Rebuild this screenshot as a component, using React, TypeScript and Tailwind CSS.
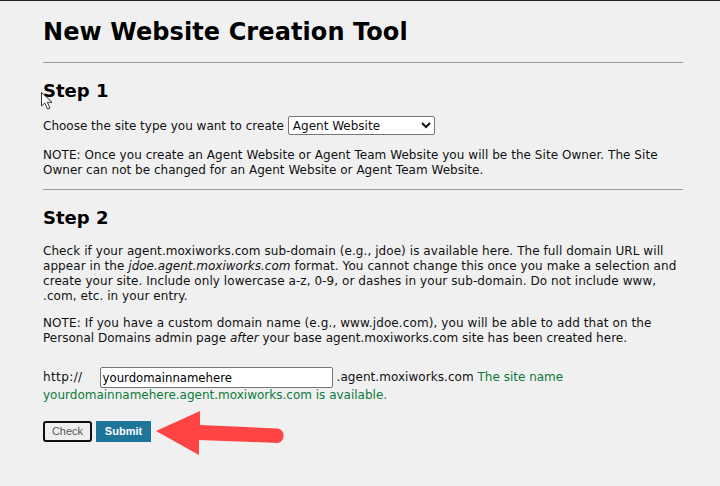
export default function App() {
  return (
    <div className="relative h-[486px] w-[720px] overflow-hidden border-t border-[#1f2328] bg-[#f0f0f0] font-['DejaVu_Sans',sans-serif] text-[12px] leading-[15px] text-[#111]">
      <div className="ml-[43px] w-[640px]">
        <h1 className="mt-[17px] text-[24px] leading-[29px] font-bold tracking-[0.09px] text-black">New Website Creation Tool</h1>
        <hr className="mt-[15px] border-t border-[#999]" />

        <h2 className="mt-[17px] text-[18px] leading-[21px] font-bold text-black">Step 1</h2>
        <div className="mt-[15px] flex h-[19px] items-center">
          <span className="pt-[1px]">Choose the site type you want to create</span>
          <select className="ml-[4px] h-[19px] w-[147px] rounded-[2px] border border-[#767676] bg-white text-[12px]" defaultValue="Agent Website">
            <option>Agent Website</option>
          </select>
        </div>
        <p className="mt-[13px]">
          <span className="tracking-[0.05px]">NOTE: Once you create an Agent Website or Agent Team Website you will be the Site Owner. The Site</span>{" "}
          <span className="tracking-[0.02px]">Owner can not be changed for an Agent Website or Agent Team Website.</span>
        </p>
        <hr className="mt-[11px] border-t border-[#999]" />

        <h2 className="mt-[17px] text-[18px] leading-[21px] font-bold text-black">Step 2</h2>
        <p className="mt-[16px] tracking-[0.07px]">
          Check if your agent.moxiworks.com sub-domain (e.g., jdoe) is available here. The full domain URL will appear in the <em className="tracking-normal">jdoe.agent.moxiworks.com</em> format. You cannot change this once you make a selection and create your site. Include only lowercase a-z, 0-9, or dashes in your sub-domain. Do not include www, .com, etc. in your entry.
        </p>
        <p className="mt-[12px]">
          <span className="tracking-[0.1px]">NOTE: If you have a custom domain name (e.g., www.jdoe.com), you will be able to add that on the</span>{" "}
          <span className="tracking-[0.01px]">Personal Domains admin page <em>after</em> your base agent.moxiworks.com site has been created here.</span>
        </p>

        <div className="mt-[21px]">
          <span className="mr-[17px] tracking-[0.4px]">http://</span>
          <input
            className="h-[21px] w-[233px] rounded-[2px] border border-[#767676] bg-white px-[2px] align-middle text-[11.7px] text-black"
            defaultValue="yourdomainnamehere"
          />
          <span className="ml-[4px] tracking-[0.05px]">.agent.moxiworks.com</span>{" "}
          <span className="text-[#0b7a3a]">The site name yourdomainnamehere.agent.moxiworks.com is available.</span>
        </div>

        <div className="mt-[18px] flex gap-[4px]">
          <button className="h-[21px] w-[49px] rounded-[3px] border-2 border-[#101010] bg-[#efefef] font-['Liberation_Sans',sans-serif] text-[11px] text-[#555]">
            Check
          </button>
          <button className="h-[21px] w-[55px] bg-[#1f7499] font-['Liberation_Sans',sans-serif] text-[11px] font-bold text-white">
            Submit
          </button>
        </div>
      </div>

      {/* annotation arrow */}
      <svg className="absolute left-[155px] top-[409px]" width="132" height="48" viewBox="0 0 132 48">
        <path d="M1 21 L45 1 L45 15 L123 18.5 A7.5 7.5 0 0 1 123 33 L44 30 L44 45 Z" fill="#ff4444" />
      </svg>

      {/* mouse pointer */}
      <svg className="absolute left-[41px] top-[91px]" width="13" height="19" viewBox="0 0 13 19">
        <path d="M0.5 0.5 L0.5 14 L3.8 11 L6.5 17 L9 16 L6.3 10.3 L11 10.3 Z" fill="#fff" stroke="#333" strokeWidth="1" />
      </svg>
    </div>
  )
}
